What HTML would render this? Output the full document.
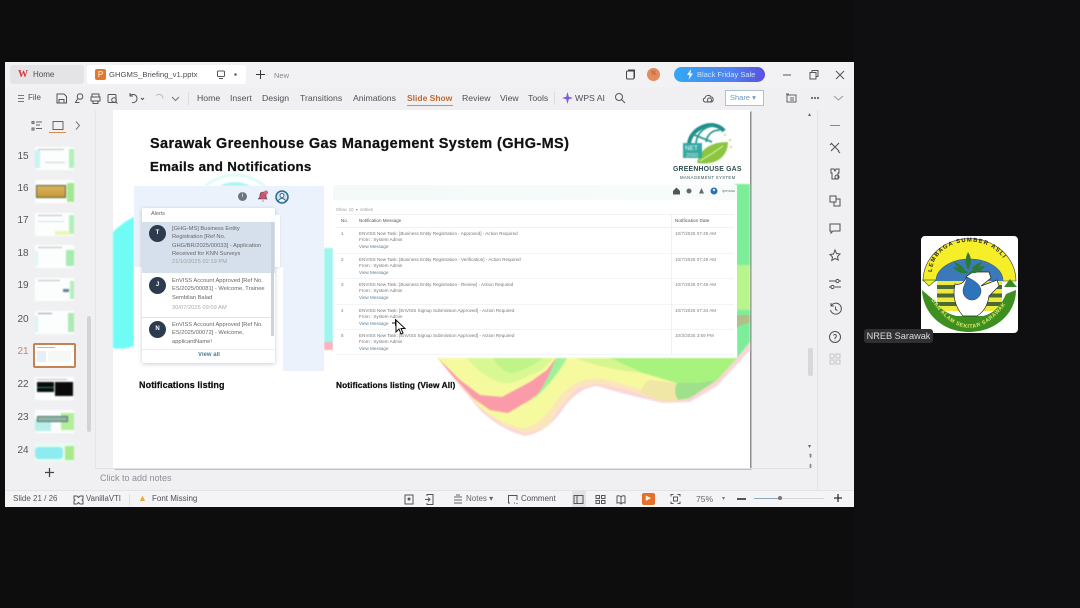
<!DOCTYPE html>
<html><head><meta charset="utf-8"><style>
html,body{margin:0;padding:0;width:1080px;height:608px;overflow:hidden;background:#0d0d0d;font-family:"Liberation Sans",sans-serif}
.a{position:absolute;white-space:nowrap}
#win{position:absolute;left:5px;top:62px;width:849px;height:445px;background:#f0f0f3}
.t{position:absolute;white-space:nowrap;font-size:8.700px;color:#4f4f55;filter:blur(.35px)}
.n{position:absolute;left:11px;width:24px;text-align:center;font-size:10px;color:#555;filter:blur(.3px)}
.th{position:absolute;left:35px;width:39px;height:23px;background:#fbfefd;overflow:hidden;filter:blur(.7px)}
svg.i{position:absolute;fill:none;stroke:#555;stroke-width:1}
.m{position:absolute;left:359px;font-size:4.550px;color:#777;white-space:nowrap;filter:blur(.35px)}
.l{color:#5b7f98}
.d{position:absolute;left:675px;font-size:4.600px;color:#808080;white-space:nowrap;filter:blur(.35px)}
.b{position:absolute;font-weight:bold;color:#111;white-space:nowrap;-webkit-text-stroke:.25px #111}
.al{position:absolute;left:172px;font-size:5.750px;line-height:8.300px;color:#666;white-space:nowrap;filter:blur(.3px)}
.av{position:absolute;left:149px;width:17px;height:17px;border-radius:50%;background:#2d3b4e;color:#fff;font-size:6px;font-weight:bold;text-align:center;line-height:17px;filter:blur(.2px)}
</style></head><body>
<div id="win"></div>
<div class="a" style="left:5px;top:62px;width:849px;height:25px;background:#f2f2f4"></div>
<div class="a" style="left:10px;top:65px;width:74px;height:19px;background:#e4e4e7;border-radius:3px"></div>
<div class="a" style="left:87px;top:65px;width:159px;height:19px;background:#fff;border-radius:3px"></div>
<div class="a" style="left:18px;top:69px;font-size:10px;font-weight:bold;color:#d9333f;font-family:'Liberation Serif',serif">W</div>
<div class="t" style="left:33px;top:70px;font-size:8px">Home</div>
<div class="a" style="left:95px;top:69px;width:11px;height:11px;background:#e5762c;border-radius:2px;color:#fff;font-size:8px;line-height:11px;text-align:center">P</div>
<div class="t" style="left:109px;top:70px;font-size:7.700px">GHGMS_Briefing_v1.pptx</div>
<svg class="i" style="left:216px;top:70px" width="30" height="10"><rect x="1.500" y="1" width="7" height="5.500" rx="1"/><path d="M3 8.500h4"/><circle cx="19.500" cy="4.500" r="1.300" fill="#666" stroke="none"/></svg>
<svg class="i" style="left:255px;top:69px;stroke:#333" width="11" height="11"><path d="M5.500 1v9M1 5.500h9"/></svg>
<div class="t" style="left:274px;top:71px;font-size:7.500px;color:#8a8a8a">New</div>
<svg class="i" style="left:625px;top:69px;stroke:#444" width="11" height="11"><rect x="1.500" y="2" width="7.500" height="8" rx="1"/><path d="M3 1h6.500v8"/></svg>
<div class="a" style="left:647px;top:68px;width:13px;height:13px;border-radius:50%;background:#e58a5e;color:#a8542c;font-size:6px;line-height:13px;text-align:center">N</div>
<div class="a" style="left:674px;top:67px;width:91px;height:15px;border-radius:8px;background:linear-gradient(90deg,#34a8f4,#4f7ff0 65%,#5a50e0)"></div>
<div class="a" style="left:697px;top:67px;color:#cfe2fb;font-size:7.500px;line-height:15px;filter:blur(.3px)">Black Friday Sale</div>
<svg class="a" style="left:686px;top:69px" width="8" height="11"><path d="M5 0L1 6h2.500L2.500 11 7 4.500H4.500z" fill="#e8f3ff"/></svg>
<svg class="i" style="left:782px;top:69px;stroke:#555" width="65" height="12"><path d="M1 6h8"/><rect x="28" y="3.500" width="6" height="6.500"/><path d="M30 3.500V1.500h6v6h-2"/><path d="M54 2l8 8M62 2l-8 8"/></svg>

<!-- toolbar -->
<svg class="i" style="left:17px;top:94px;stroke:#777" width="8" height="9"><path d="M1 1.500h6M1 4.500h6M1 7.500h6"/></svg>
<div class="t" style="left:28px;top:93px;font-size:8px">File</div>
<svg class="i" style="left:56px;top:92px;stroke:#555" width="125" height="13"><path d="M1 2h7l2.500 2.500V11H1zM3 11V7.500h5V11"/><circle cx="24" cy="4.500" r="2.800"/><path d="M21.500 7l-2 3.500h4"/><path d="M36 5V2h7v3M35 5h9v4h-9zM37 9v2.500h5V9"/><rect x="52" y="2.500" width="8" height="8" rx="1"/><circle cx="58" cy="8" r="2.300"/><path d="M60 10l1.500 1.500"/><path d="M74 3.500c3-2.500 7-.5 7 3s-3 4.500-5 4M74 1v3h3"/><path d="M85 6l1.500 1.500L88 6"/><path d="M100 3.500c3-2.500 7-.5 7 3" stroke="#bbb"/><path d="M116 5l3.500 3.500L123 5" stroke="#777"/></svg>
<div class="a" style="left:188px;top:92px;width:1px;height:13px;background:#ddd"></div>
<div class="t" style="left:197px;top:93px">Home</div>
<div class="t" style="left:230px;top:93px">Insert</div>
<div class="t" style="left:262px;top:93px">Design</div>
<div class="t" style="left:300px;top:93px">Transitions</div>
<div class="t" style="left:353px;top:93px">Animations</div>
<div class="t" style="left:407px;top:93px;color:#bf6a33;font-weight:bold;font-size:8.500px">Slide Show</div>
<div class="a" style="left:407px;top:105px;width:46px;height:1px;background:#d98a55"></div>
<div class="t" style="left:462px;top:93px">Review</div>
<div class="t" style="left:500px;top:93px">View</div>
<div class="t" style="left:528px;top:93px">Tools</div>
<div class="a" style="left:554px;top:92px;width:1px;height:13px;background:#ddd"></div>
<svg class="i" style="left:562px;top:92px;stroke:none;fill:#7c5be0" width="11" height="12"><path d="M5.500 0l1.300 4.700L11 6 6.800 7.300 5.500 12 4.200 7.300 0 6l4.200-1.300z"/></svg>
<div class="t" style="left:575px;top:93px">WPS AI</div>
<svg class="i" style="left:614px;top:92px" width="12" height="12"><circle cx="5" cy="5" r="3.500"/><path d="M7.500 7.500l3.500 3.500"/></svg>
<svg class="i" style="left:702px;top:93px" width="13" height="11"><path d="M3.500 9C1 9 .5 5.500 3 5c.5-3 5-3.500 6-1 2.500 0 3 4 .5 5z"/><circle cx="7.500" cy="7" r="2"/></svg>
<div class="a" style="left:725px;top:90px;width:37px;height:14px;background:#fff;border:1px solid #a9c3d4;font-size:7.500px;line-height:14px;color:#6a97b5;text-indent:4px;filter:blur(.2px)">Share ▾</div>
<svg class="i" style="left:785px;top:93px;stroke:#666" width="60" height="11"><path d="M2 2h9v7H2zM1 1h3M5 5h4M5 7h4"/><circle cx="27" cy="5" r=".6"/><circle cx="30" cy="5" r=".6"/><circle cx="33" cy="5" r=".6"/><path d="M49 3l4.500 4L58 3" stroke="#999"/></svg>

<!-- side panel -->
<div class="a" style="left:95px;top:110px;width:1px;height:358px;background:#e5e5e8"></div>
<svg class="i" style="left:31px;top:120px;stroke:#666" width="54" height="12"><path d="M1 1.500h2v2H1zM1 8h2v2H1zM5 2h6M5 5h4M5 8.500h6"/><rect x="22" y="1.500" width="10" height="8"/><path d="M45 1.500l3.500 4-3.500 4" stroke="#777"/></svg>
<div class="a" style="left:49px;top:132px;width:17px;height:1px;background:#d98a55"></div>
<div class="n" style="top:151px">15</div><div class="n" style="top:183px">16</div><div class="n" style="top:215px">17</div><div class="n" style="top:248px">18</div><div class="n" style="top:280px">19</div><div class="n" style="top:314px">20</div><div class="n" style="top:346px;color:#b98a66">21</div><div class="n" style="top:379px">22</div><div class="n" style="top:412px">23</div><div class="n" style="top:445px">24</div>
<div class="th" style="top:147px"><div class="a" style="left:0;top:3px;width:5px;height:18px;background:#c8f3ef"></div><div class="a" style="left:34px;top:2px;width:5px;height:19px;background:#b2efba"></div><div class="a" style="left:3px;top:2px;width:26px;height:1px;background:#bbb"></div><div class="a" style="left:10px;top:15px;width:20px;height:1px;background:#ccc"></div></div>
<div class="th" style="top:180px"><div class="a" style="left:32px;top:3px;width:7px;height:19px;background:#a2e88e"></div><div class="a" style="left:1px;top:5px;width:28px;height:11px;background:linear-gradient(#d9b45a,#c59a3c);border:1px solid #5c5c3c"></div></div>
<div class="th" style="top:213px"><div class="a" style="left:34px;top:2px;width:5px;height:19px;background:#b2efba"></div><div class="a" style="left:20px;top:18px;width:15px;height:4px;background:#eef5b8"></div><div class="a" style="left:3px;top:2px;width:24px;height:1px;background:#bbb"></div><div class="a" style="left:3px;top:8px;width:26px;height:1px;background:#d6dde4"></div></div>
<div class="th" style="top:245px"><div class="a" style="left:31px;top:5px;width:8px;height:16px;background:#a6ecb0"></div><div class="a" style="left:0;top:6px;width:3px;height:15px;background:#dcf7f4"></div><div class="a" style="left:3px;top:2px;width:24px;height:1px;background:#bbb"></div></div>
<div class="th" style="top:278px"><div class="a" style="left:35px;top:3px;width:4px;height:18px;background:#b2efba"></div><div class="a" style="left:28px;top:11px;width:6px;height:3px;background:#5c7f9a"></div><div class="a" style="left:3px;top:2px;width:22px;height:1px;background:#bbb"></div></div>
<div class="th" style="top:311px"><div class="a" style="left:33px;top:2px;width:6px;height:19px;background:#ace9b4"></div><div class="a" style="left:0;top:5px;width:3px;height:16px;background:#d6f6f2"></div><div class="a" style="left:3px;top:2px;width:14px;height:1px;background:#999"></div></div>
<div class="a" style="left:33px;top:343px;width:39px;height:21px;background:#fff;border:2px solid #c48350;border-radius:2px;overflow:hidden;filter:blur(.3px)"><div class="a" style="left:2px;top:6px;width:9px;height:11px;background:#e6eef8"></div><div class="a" style="left:13px;top:6px;width:23px;height:11px;background:#f6f8f8"></div><div class="a" style="left:2px;top:2px;width:18px;height:1px;background:#bbb"></div></div>
<div class="th" style="top:377px"><div class="a" style="left:2px;top:5px;width:17px;height:10px;background:#0a0a0a"></div><div class="a" style="left:20px;top:5px;width:18px;height:14px;background:#0a0a0a"></div><div class="a" style="left:2px;top:2px;width:30px;height:1px;background:#bbb"></div><div class="a" style="left:2px;top:10px;width:17px;height:1px;background:#1a8a7a"></div></div>
<div class="th" style="top:410px"><div class="a" style="left:0;top:9px;width:16px;height:12px;background:#b9efea"></div><div class="a" style="left:26px;top:3px;width:13px;height:17px;background:#b4ee9a"></div><div class="a" style="left:2px;top:6px;width:29px;height:4px;background:#8fb8a8;border:1px solid #4c6f66"></div></div>
<div class="th" style="top:443px;height:19px;background:#e8fbf3"><div class="a" style="left:0;top:4px;width:28px;height:12px;background:#8cecf0;border-radius:4px"></div><div class="a" style="left:30px;top:3px;width:9px;height:14px;background:#a8ea8a"></div></div>
<div class="a" style="left:87px;top:316px;width:4px;height:116px;background:#d3d3d6;border-radius:2px"></div>
<svg class="i" style="left:44px;top:467px;stroke:#444;stroke-width:1.300" width="11" height="11"><path d="M5.500 1v9M1 5.500h9"/></svg>

<!-- slide -->
<div class="a" style="left:113px;top:110px;width:637px;height:358px;background:#fff;box-shadow:1.500px 1.500px 0 #8e8e8e;overflow:hidden"></div>
<svg class="a" style="left:113px;top:110px;filter:blur(.8px)" width="637" height="358">
<path d="M0 122Q10 112 21 107V236Q10 240 0 238Z" fill="#6ffcf5"/>
<path d="M92 76Q122 54 152 76" fill="none" stroke="#d6fbf8" stroke-width="2.500"/>
<path d="M106 76Q122 68 138 76Z" fill="#a8f8f2"/>
<path d="M211 138H220V232H211Z" fill="#9ff5ee"/>
<path d="M211 232H220V240H211Z" fill="#fbb4c0"/>
<path d="M622 74H637V232L624 248Z" fill="#7cee9a"/>
<path d="M622 155H637V200H622Z" fill="#b8f58c"/>
<path d="M622 205H637V212L622 218Z" fill="#b0c088"/>
<!-- swoosh -->
<path d="M324 248L367 297 390 315 412 323 434 317 450 293 464 278 484 273 517 280 550 291 577 288 604 270 624 248 637 232 637 240 604 276 577 292 550 293Q510 284 484 276 466 278 452 296 436 322 412 326 388 320 367 300Z" fill="#fbd6d6"/>
<path d="M324 248H624L604 270 577 288Q560 292 550 291L517 280 484 273 464 278 450 293 434 317 412 323 390 315 367 297Z" fill="#f6fa9e"/>
<path d="M370 300Q392 316 412 318 428 314 440 296 452 276 470 270L484 268Q510 272 548 287L552 291 517 280 484 273 464 278 450 293 434 317 412 323 390 315Z" fill="#fbe6bc"/>
<path d="M497 248H624L604 270 584 273 564 273 530 263Z" fill="#a8f27e"/>
<path d="M564 273H584L604 270 577 288 565 290Q558 278 564 273Z" fill="#9fe08a"/>
<path d="M536 270L564 273Q560 282 565 290 556 292 550 291L527 283Q530 274 536 270Z" fill="#f0e6a6"/>
<path d="M462 248H497L530 263Q500 260 480 254Z" fill="#d6f58e"/>
<path d="M354 248H440Q430 262 417 265 400 275 389 273 370 268 354 248Z" fill="#d8f894"/>
<path d="M380 248H430Q418 258 400 263 388 262 380 248Z" fill="#c0f388"/>
<path d="M325 248L347 270 367 285 389 287 417 272 434 260 443 248 430 280 417 290 395 303 377 300 360 288 337 263Z" fill="#fb9aa8"/>
<path d="M443 248H454Q442 270 417 293 432 278 443 248Z" fill="#9ff29a"/>
</svg>
<div class="a" style="left:333px;top:185px;width:404px;height:172px;background:#fff"></div>
<div class="b" style="left:150px;top:136px;font-size:14.450px;letter-spacing:.42px">Sarawak Greenhouse Gas Management System (GHG-MS)</div>
<div class="b" style="left:150px;top:159px;font-size:13.300px;letter-spacing:.3px">Emails and Notifications</div>

<!-- logo -->
<svg class="a" style="left:682px;top:122px;filter:blur(.4px)" width="60" height="44">
<path d="M7 22C8 6 32-4 42 9" fill="none" stroke="#1f8f8a" stroke-width="4"/>
<path d="M14 21C15 11 22 5 31 4M24 20C25 13 30 8 38 8M10 12L30 20" fill="none" stroke="#2b9c93" stroke-width="1.800"/>
<path d="M15 41C18 26 30 20 46 20 46 33 36 44 15 41Z" fill="#8cc63f"/>
<path d="M18 39Q30 32 41 24" stroke="#e4f2c4" fill="none"/>
<rect x="1" y="21" width="19" height="15" fill="#33a9a2"/>
<text x="3" y="28" font-size="6.500" fill="#fff" font-family="Liberation Sans">NET</text>
<text x="4" y="35" font-size="5.500" fill="#d6f0d0" font-family="Liberation Sans">2050</text>
<circle cx="43" cy="13" r="1" fill="#c9c86a"/><circle cx="48" cy="18" r="1" fill="#c9c86a"/><circle cx="49" cy="25" r="1" fill="#c9c86a"/>
</svg>
<div class="b" style="left:673px;top:166px;font-size:6.900px;color:#2f4f50;letter-spacing:.2px;-webkit-text-stroke:0">GREENHOUSE GAS</div>
<div class="a" style="left:680px;top:175px;font-size:4.300px;color:#355;letter-spacing:.35px">MANAGEMENT SYSTEM</div>

<!-- left panel -->
<div class="a" style="left:134px;top:186px;width:190px;height:185px;background:#ecf2fb"></div>
<div class="a" style="left:134px;top:267px;width:149px;height:104px;background:#fff"></div>
<div class="a" style="left:238px;top:192px;width:9px;height:9px;border-radius:50%;background:#6e7480;color:#fff;font-size:6px;line-height:9px;text-align:center">i</div>
<svg class="a" style="left:257px;top:190px" width="12" height="13"><path d="M1 9Q3 8 3 5T6 2Q9 2 9 5T10 9ZM5 11h2" fill="#c4586f" stroke="#4a3a48" stroke-width=".6"/><circle cx="9" cy="2.500" r="2" fill="#e0607c"/></svg>
<svg class="a" style="left:275px;top:190px" width="14" height="14"><circle cx="7" cy="7" r="6" fill="#d4e2ef" stroke="#2c6a94" stroke-width="1.500"/><circle cx="7" cy="5.500" r="2" fill="#fff" stroke="#2c6a94"/><path d="M3 11Q7 6 11 11" fill="#fff" stroke="#2c6a94"/></svg>
<div class="a" style="left:142px;top:208px;width:133px;height:155px;background:#fff;border-radius:2px;box-shadow:0 1px 4px rgba(80,90,110,.3)"></div>
<div class="a" style="left:275px;top:215px;width:5px;height:52px;background:#fff;box-shadow:0 1px 2px rgba(0,0,0,.1)"></div>
<div class="a" style="left:151px;top:211px;font-size:5.500px;color:#666;filter:blur(.2px)">Alerts</div>
<div class="a" style="left:142px;top:222px;width:133px;height:51px;background:#d6e0ec"></div>
<div class="a" style="left:271px;top:222px;width:3px;height:114px;background:#ccd2da"></div>
<div class="av" style="top:225px">T</div>
<div class="al" style="top:225px">[GHG-MS] Business Entity<br>Registration [Ref No.<br>GHG/BR/2025/00033] - Application<br>Received for KNN Surveys<br><span style="color:#a0a0a0">21/10/2025 02:19 PM</span></div>
<div class="av" style="top:277px">J</div>
<div class="al" style="top:277px">EnVISS Account Approved [Ref No.<br>ES/2025/00081] - Welcome, Trainee<br>Sembilan Balad<br><span style="color:#aaa;line-height:13px">30/07/2025 09:09 AM</span></div>
<div class="a" style="left:142px;top:317px;width:129px;height:1px;background:#e2e2e2"></div>
<div class="av" style="top:321px">N</div>
<div class="al" style="top:321px">EnVISS Account Approved [Ref No.<br>ES/2025/00072] - Welcome,<br>applicantName!</div>
<div class="a" style="left:142px;top:349px;width:133px;height:1px;background:#eee"></div>
<div class="a" style="left:198px;top:352px;font-size:6px;color:#4d7f9b;font-weight:bold;filter:blur(.2px)">View all</div>
<div class="b" style="left:139px;top:380px;font-size:9px;letter-spacing:.1px">Notifications listing</div>

<!-- right panel -->
<div class="a" style="left:333px;top:185px;width:404px;height:15px;background:linear-gradient(90deg,#f3faf8,#f7fcfb)"></div>
<svg class="a" style="left:672px;top:186px;filter:blur(.2px)" width="50" height="10"><path d="M1 5l3.500-3.500L8 5v3.500H1z" fill="#555"/><circle cx="17" cy="5" r="2.500" fill="#666"/><path d="M27 7.500L29.500 2l2.500 5.500z" fill="#666"/><circle cx="42" cy="5" r="3.500" fill="#2c6fb4"/><circle cx="42" cy="4" r="1.200" fill="#dbe8f5"/></svg>
<div class="a" style="left:722px;top:188px;font-size:4px;color:#777">ipmsaa</div>
<div class="d" style="left:336px;top:207px;color:#999;font-size:4.200px">Show &nbsp;10 &nbsp;▾ &nbsp;entries</div>
<div class="a" style="left:336px;top:214px;width:398px;height:1px;background:#f2f4f4"></div>
<div class="a" style="left:336px;top:227px;width:398px;height:1px;background:#f0f2f2"></div>
<div class="a" style="left:336px;top:253px;width:398px;height:1px;background:#f3f5f5"></div>
<div class="a" style="left:336px;top:278px;width:398px;height:1px;background:#f3f5f5"></div>
<div class="a" style="left:336px;top:304px;width:398px;height:1px;background:#f3f5f5"></div>
<div class="a" style="left:336px;top:329px;width:398px;height:1px;background:#f3f5f5"></div>
<div class="a" style="left:336px;top:354px;width:398px;height:1px;background:#f3f5f5"></div>
<div class="a" style="left:671px;top:214px;width:1px;height:140px;background:#f0f2f2"></div>
<div class="m" style="left:341px;top:218px;color:#555">No.</div><div class="m" style="top:218px;color:#555">Notification Message</div><div class="d" style="top:218px;color:#555;font-size:4.700px">Notification Date</div>
<div class="m" style="left:341px;top:231px">1</div><div class="m" style="top:231px;line-height:6.400px">ENVISS New Task: [Business Entity Registration - Approved] - Action Required<br>From : System Admin<br><span class="l">View Message</span></div><div class="d" style="top:231px">10/7/2025 07:49 AM</div>
<div class="m" style="left:341px;top:257px">2</div><div class="m" style="top:257px;line-height:6.400px">ENVISS New Task: [Business Entity Registration - Verification] - Action Required<br>From : System Admin<br><span class="l">View Message</span></div><div class="d" style="top:257px">10/7/2025 07:49 AM</div>
<div class="m" style="left:341px;top:282px">3</div><div class="m" style="top:282px;line-height:6.400px">ENVISS New Task: [Business Entity Registration - Review] - Action Required<br>From : System Admin<br><span class="l">View Message</span></div><div class="d" style="top:282px">10/7/2025 07:49 AM</div>
<div class="m" style="left:341px;top:308px">4</div><div class="m" style="top:308px;line-height:6.400px">ENVISS New Task: [EnVISS Signup Submission Approved] - Action Required<br>From : System Admin<br><span class="l">View Message</span></div><div class="d" style="top:308px">10/7/2025 07:34 AM</div>
<div class="m" style="left:341px;top:333px">5</div><div class="m" style="top:333px;line-height:6.400px">ENVISS New Task: [EnVISS Signup Submission Approved] - Action Required<br>From : System Admin<br><span class="l">View Message</span></div><div class="d" style="top:333px">10/3/2025 3:59 PM</div>
<svg class="a" style="left:391px;top:315px" width="16" height="20"><path d="M1 8h7M4.500 4v7" stroke="#111" stroke-width="1"/><path d="M5 5l0 12 3-3 2 5 2-1-2-4.500h4z" fill="#fff" stroke="#111" stroke-width="1"/></svg>
<div class="b" style="left:336px;top:380px;font-size:8.300px;letter-spacing:.1px">Notifications listing (View All)</div>

<!-- notes -->
<div class="a" style="left:95px;top:468px;width:715px;height:1px;background:#e2e2e5"></div>
<div class="t" style="left:100px;top:473px;color:#8f8f94;font-size:9px">Click to add notes</div>
<div class="a" style="left:5px;top:490px;width:849px;height:1px;background:#e4e4e7"></div>
<div class="a" style="left:5px;top:491px;width:849px;height:16px;background:#f4f4f6"></div>
<!-- right rail -->
<div class="a" style="left:817px;top:110px;width:1px;height:380px;background:#e3e3e6"></div>
<div class="a" style="left:808px;top:348px;width:5px;height:28px;background:#d8d8db;border-radius:2px"></div>
<div class="a" style="left:808px;top:111px;font-size:6px;color:#666">▴</div>
<div class="a" style="left:808px;top:442px;font-size:6px;line-height:10px;color:#666">▾<br>⇞<br>⇟</div>
<svg class="i" style="left:828px;top:120px;stroke:#4f4f55" width="14" height="245">
<path d="M2 5.500h10" stroke="#888"/>
<path d="M3 23l8 8M11 23l-8 8M2 25l2-2M10 31l2 2"/><path d="M3 49h3l1 2 1-2h3v4h-1v6H4v-6H3z"/><circle cx="9" cy="57" r="2"/>
<path d="M2 76h6v6H2zM6 82v4h6v-7H8"/>
<path d="M2 104h10v7H5l-2 2v-2H2z"/><path d="M7 130l1.500 3.500 3.500.5-2.500 2.500.7 3.500L7 138.500 3.800 140.500l.7-3.500L2 134.500l3.500-.5z"/>
<path d="M1 161h7M11 161h2M1 167h2M7 167h6"/><circle cx="9.500" cy="161" r="1.600"/><circle cx="4.500" cy="167" r="1.600"/>
<path d="M3 186a5.500 5.500 0 1 1-.5 4M3 183v3h3M7.500 186.500v3l2 1"/>
<circle cx="7" cy="217" r="5.500"/><path d="M5.500 215.500a1.500 1.500 0 1 1 2.500 1.500l-1 1v1M7 220.500v.5"/>
<g stroke="#c6c6ca"><rect x="2" y="234" width="4" height="4"/><rect x="8" y="234" width="4" height="4"/><rect x="2" y="240" width="4" height="4"/><rect x="8" y="240" width="4" height="4"/></g>
</svg>

<!-- status -->
<div class="t" style="left:13px;top:494px;font-size:8px;color:#555">Slide 21 / 26</div>
<svg class="i" style="left:73px;top:494px;stroke:#555" width="11" height="11"><path d="M1 2h3l1.500 1.500L7 2h3v3l-1 1 1 1v3H7L5.500 8.500 4 10H1V7l1-1-1-1z"/></svg>
<div class="t" style="left:86px;top:494px;font-size:7.800px">VanillaVTI</div>
<div class="a" style="left:129px;top:494px;width:1px;height:11px;background:#e6dcdc"></div>
<div class="a" style="left:138px;top:493px;color:#eaa93a;font-size:9px">▲</div>
<div class="t" style="left:152px;top:494px;font-size:8px">Font Missing</div>
<svg class="i" style="left:403px;top:493px;stroke:#555" width="34" height="13"><rect x="2" y="2" width="8" height="9"/><circle cx="6" cy="6" r="1" fill="#555"/><path d="M24 3V1.500h6v10h-6V10M22 6.500h5M25 4.500l2 2-2 2"/></svg>
<svg class="i" style="left:453px;top:494px;stroke:#666" width="12" height="11"><path d="M1 3h8M1 6h8M1 9h8M3 1h4"/></svg>
<div class="t" style="left:466px;top:494px;font-size:8px;color:#666">Notes ▾</div>
<svg class="i" style="left:507px;top:494px;stroke:#555" width="12" height="11"><path d="M3 9H1.500V1.500h8.500V6M7 9h1M10 9v1"/></svg>
<div class="t" style="left:521px;top:494px;font-size:8px">Comment</div>
<div class="a" style="left:572px;top:491px;width:14px;height:16px;background:#e3e3e6"></div>
<svg class="i" style="left:573px;top:494px;stroke:#555" width="54" height="11"><rect x="1" y="1.500" width="9" height="8"/><path d="M4 1.500v8"/><rect x="23" y="1.500" width="3.500" height="3"/><rect x="28.500" y="1.500" width="3.500" height="3"/><rect x="23" y="6.500" width="3.500" height="3"/><rect x="28.500" y="6.500" width="3.500" height="3"/><path d="M48 3c-1-1.500-3-1.500-4-1v7c1-.5 3-.5 4 1 1-1.500 3-1.500 4-1V2c-1-.5-3-.5-4 1v7"/></svg>
<div class="a" style="left:642px;top:493px;width:13px;height:12px;background:#e5702c;border-radius:2px;color:#fff2d5;font-size:7px;line-height:12px;text-align:center">▶</div>
<svg class="i" style="left:670px;top:493px;stroke:#555" width="11" height="12"><path d="M1 3.500V1.500h2.500M7.500 1.500H10v2M10 8.500v2H7.500M3.500 10.500H1v-2"/><rect x="3.500" y="4" width="4" height="4"/></svg>
<div class="t" style="left:696px;top:494px;font-size:8.500px;color:#666">75%</div>
<div class="a" style="left:722px;top:495px;font-size:6px;color:#777">▾</div>
<div class="a" style="left:737px;top:498px;width:9px;height:1.500px;background:#555"></div>
<div class="a" style="left:754px;top:498px;width:70px;height:1px;background:#d8d8dc"></div>
<div class="a" style="left:754px;top:498px;width:25px;height:1px;background:#8fa9bb"></div>
<div class="a" style="left:778px;top:496px;width:4px;height:4px;border-radius:50%;background:#777"></div>
<svg class="i" style="left:833px;top:493px;stroke:#333;stroke-width:1.300" width="10" height="10"><path d="M5 1v8M1 5h8"/></svg>

<!-- participant -->
<div class="a" style="left:854px;top:0;width:226px;height:608px;background:#0f0f11"></div>
<div class="a" style="left:921px;top:236px;width:97px;height:97px;background:#fff;border-radius:4px;overflow:hidden">
<svg width="97" height="97" style="filter:blur(.35px)">
<defs><path id="arc" d="M11 36A37 30 0 0 1 86 36"/><path id="arc2" d="M10 64Q48 120 88 64"/></defs>
<path d="M2 45A46 42 0 0 1 95 45H82A33.500 22 0 0 0 15 45Z" fill="#f7ee2a" stroke="#333" stroke-width=".6"/>
<path d="M15 45A33.500 22 0 0 1 82 45Z" fill="#3b79b8"/>
<rect x="16" y="45" width="65" height="30" fill="#efe93a"/>
<g fill="#4b6b36"><rect x="16" y="49" width="65" height="4"/><rect x="16" y="57.500" width="65" height="4"/><rect x="16" y="66" width="65" height="4"/></g>
<path d="M1 54C2 78 22 96 48 96 74 96 95 78 95 54L85 58C80 70 72 78 62 80H36C26 78 18 72 15 66Z" fill="#3d9020"/>
<path d="M2 44H15L8 50Z" fill="#f7ee2a" stroke="#2c7a2a" stroke-width=".7"/>
<path d="M83 51L89 43 96 51Z" fill="#3a8a2a"/>
<path d="M34 48Q42 50 46 40L52 36 68 36 70 42 60 50 76 44 78 50 68 60Q66 74 56 80H42Q30 66 34 48Z" fill="#fff" stroke="#222" stroke-width=".7"/>
<path d="M46 41C45 47 42 50 42 55A9 9 0 0 0 60 55C60 48 52 44 46 41Z" fill="#2f74bb" stroke="#222" stroke-width=".4"/>
<path d="M47 37C44 33 38 31 32 31 36 36 40 38 47 37ZM48 37C52 33 57 30 64 30 60 36 55 38 48 37ZM47 34C44 28 44 22 47 16 51 22 51 28 47 34ZM44 33C40 29 37 27 33 26 35 31 39 33 44 33ZM50 33C54 29 57 27 61 26 59 31 55 33 50 33Z" fill="#2c7a33"/>
<text font-size="5.800" font-weight="bold" fill="#222" letter-spacing="1.200" font-family="Liberation Sans"><textPath href="#arc">LEMBAGA SUMBER ASLI</textPath></text>
<text font-size="5.400" font-weight="bold" fill="#dfe86a" letter-spacing=".5" font-family="Liberation Sans"><textPath href="#arc2">DAN ALAM SEKITAR SARAWAK</textPath></text>
</svg></div>
<div class="a" style="left:864px;top:329px;width:69px;height:14px;background:#303032;border-radius:3px;color:#dcdcdc;font-size:9.200px;line-height:14px;text-align:center;filter:blur(.2px)">NREB Sarawak</div>
</body></html>
